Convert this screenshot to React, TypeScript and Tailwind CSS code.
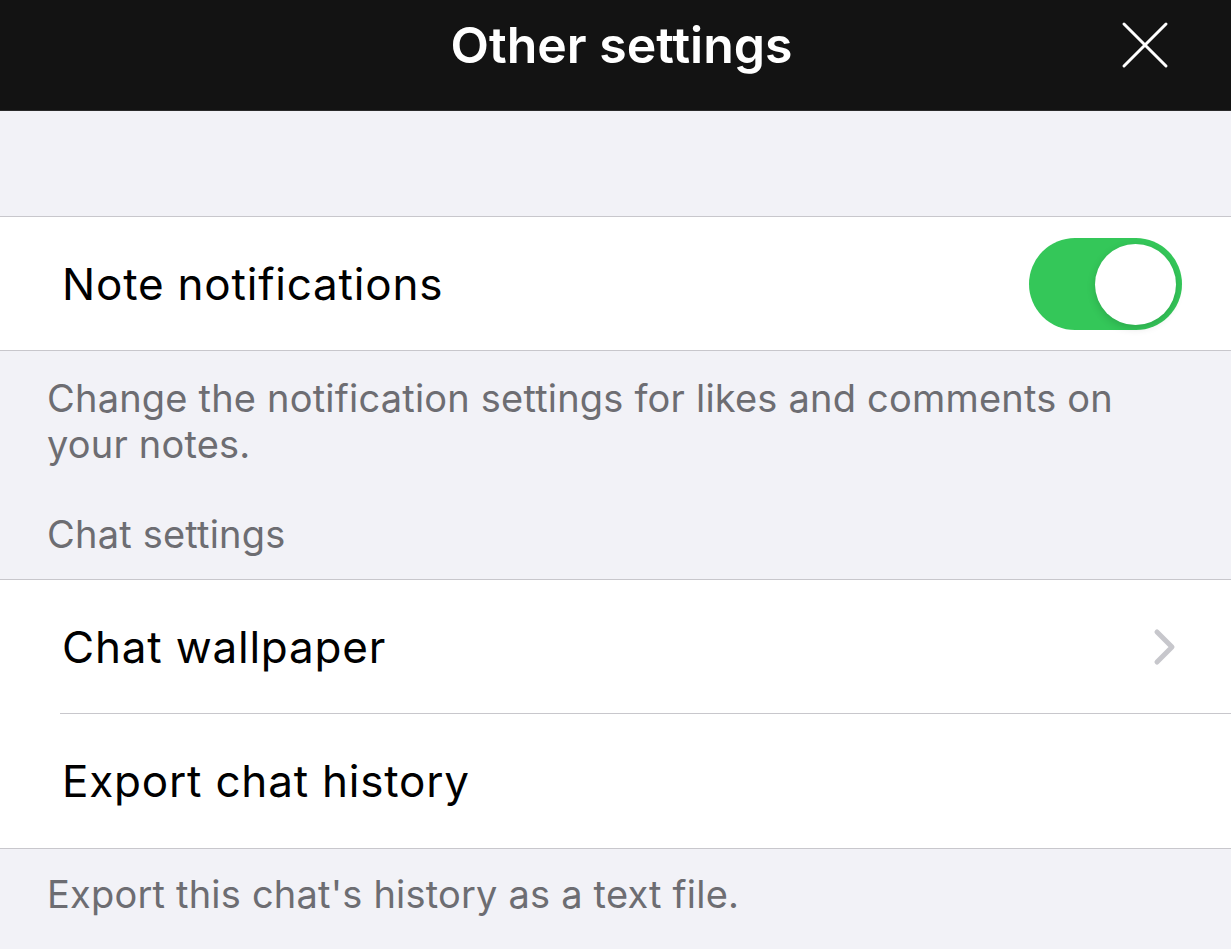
import { useState } from "react"

function Toggle({ on, onChange }: { on: boolean; onChange: () => void }) {
  return (
    <button
      onClick={onChange}
      className={`relative h-[92px] w-[153px] rounded-full transition-colors ${on ? "bg-[#34c759]" : "bg-[#e9e9ea]"}`}
    >
      <span
        className={`absolute top-[6px] h-[81px] w-[81px] rounded-full bg-white shadow-[0_3px_8px_rgba(0,0,0,0.15)] transition-all ${on ? "left-[66px]" : "left-[6px]"}`}
      />
    </button>
  )
}

function Chevron() {
  return (
    <svg width="26" height="40" viewBox="0 0 26 40" fill="none">
      <path d="M5 5 L20 20 L5 35" stroke="#c7c7cc" strokeWidth="5" strokeLinecap="round" strokeLinejoin="round" />
    </svg>
  )
}

export default function App() {
  const [notes, setNotes] = useState(true)

  return (
    <div className="min-h-screen bg-[#f2f2f7] font-['Inter','Liberation_Sans',sans-serif] antialiased">
      {/* Header */}
      <header className="grid h-[111px] grid-cols-[1fr_auto_1fr] items-center border-b border-[#2a2a2a] bg-[#131313] pb-[20px]">
        <div />
        <h1 className="pl-[12px] text-[50px] font-semibold text-white">Other settings</h1>
        <div className="flex justify-end pr-[62px]">
          <svg width="48" height="48" viewBox="0 0 48 48" fill="none">
            <path d="M3 3 L45 45 M45 3 L3 45" stroke="white" strokeWidth="3" strokeLinecap="round" />
          </svg>
        </div>
      </header>

      <div className="h-[105px]" />

      {/* Note notifications */}
      <div className="flex h-[135px] items-center justify-between border-y border-[#c8c7cc] bg-white pl-[62px] pr-[49px]">
        <span className="text-[44px] tracking-[0.8px] text-black">Note notifications</span>
        <Toggle on={notes} onChange={() => setNotes(!notes)} />
      </div>

      <div className="px-[47px] pb-[22px] pt-[24px] text-[38px] leading-[46px] tracking-[0.2px] text-[#6d6d72]">
        <p className="max-w-[1120px]">Change the notification settings for likes and comments on your notes.</p>
        <p className="mt-[44px]">Chat settings</p>
      </div>

      {/* Chat settings */}
      <div className="border-y border-[#c8c7cc] bg-white">
        <div className="flex h-[133px] items-center justify-between pl-[62px] pr-[53px]">
          <span className="text-[44px] tracking-[0.8px] text-black">Chat wallpaper</span>
          <Chevron />
        </div>
        <div className="ml-[60px] border-t border-[#c8c7cc]" />
        <div className="flex h-[134px] items-center pl-[62px]">
          <span className="text-[44px] tracking-[0.8px] text-black">Export chat history</span>
        </div>
      </div>

      <div className="px-[47px] pt-[22px] text-[38px] leading-[46px] tracking-[0.2px] text-[#6d6d72]">
        <p>Export this chat's history as a text file.</p>
      </div>
    </div>
  )
}
